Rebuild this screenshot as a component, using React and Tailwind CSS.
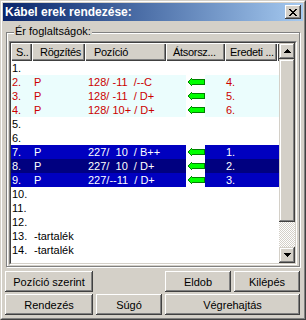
import React from "react";

const rows = [
  { n: "1." },
  { n: "2.", r: "P", p: "128/ -11  /--C", a: true, e: "4.", k: "red" },
  { n: "3.", r: "P", p: "128/ -11  / D+", a: true, e: "5.", k: "red" },
  { n: "4.", r: "P", p: "128/ 10+ / D+", a: true, e: "6.", k: "red" },
  { n: "5." },
  { n: "6." },
  { n: "7.", r: "P", p: "227/  10  / B++", a: true, e: "1.", k: "blue" },
  { n: "8.", r: "P", p: "227/  10  / D+", a: true, e: "2.", k: "sel" },
  { n: "9.", r: "P", p: "227/--11  / D+", a: true, e: "3.", k: "blue" },
  { n: "10." },
  { n: "11." },
  { n: "12." },
  { n: "13.", r: "-tartalék" },
  { n: "14.", r: "-tartalék" },
];

const kindCls = {
  red: "bg-[#ebfdfd] text-[#cc0000]",
  blue: "bg-[#0000c0] text-white",
  sel: "bg-[#000080] text-white",
};

function Arrow() {
  return (
    <svg width="19" height="10" viewBox="0 0 19 10" shapeRendering="crispEdges">
      <polygon points="1,5 6,0 6,2 19,2 19,8 6,8 6,10" fill="#008000" />
      <polygon points="2,5 6,1.5 6,3 18,3 18,7 6,7 6,8.5" fill="#00ff00" />
    </svg>
  );
}

function Tri({ up }) {
  return (
    <svg width="7" height="4" viewBox="0 0 7 4" shapeRendering="crispEdges">
      {up ? (
        <polygon points="3.5,0 7,4 0,4" fill="#000" />
      ) : (
        <polygon points="0,0 7,0 3.5,4" fill="#000" />
      )}
    </svg>
  );
}

const raised =
  "bg-[#d4d0c8] shadow-[inset_-1px_-1px_#404040,inset_1px_1px_#fff,inset_-2px_-2px_#808080]";
const sbRaised =
  "bg-[#d4d0c8] shadow-[inset_-1px_-1px_#404040,inset_1px_1px_#d4d0c8,inset_-2px_-2px_#808080,inset_2px_2px_#fff]";

function Btn({ w, children }) {
  return (
    <div className={`${raised} ${w} h-[21px] flex items-center justify-center text-black`}>
      {children}
    </div>
  );
}

function Hdr({ w, pl, children }) {
  return (
    <div
      className={`${w} ${pl} h-[18px] shrink-0 flex items-center overflow-hidden whitespace-nowrap tracking-[-0.3px] bg-[#d4d0c8] shadow-[inset_1px_1px_#fff,inset_-1px_-1px_#404040,inset_-2px_-2px_#808080]`}
    >
      {children}
    </div>
  );
}

export default function App() {
  return (
    <div className="w-[306px] h-[320px] bg-[#d4d0c8] border border-t-[#d4d0c8] border-l-[#d4d0c8] border-r-[#404040] border-b-[#404040] font-['Liberation_Sans',Arial,sans-serif] text-[11px] leading-[14px] text-black">
      <div className="h-full border border-t-white border-l-white border-r-[#808080] border-b-[#808080] p-[1px] flex flex-col">
        {/* title bar */}
        <div className="h-[18px] shrink-0 flex items-center justify-between pl-[2px] pr-[2px] bg-gradient-to-r from-[#0a246a] to-[#a6caf0]">
          <span className="text-white font-bold text-[12px] leading-[18px]">Kábel erek rendezése:</span>
          <div className={`${raised} w-[16px] h-[14px] flex items-center justify-center`}>
            <svg width="8" height="7" viewBox="0 0 8 7" shapeRendering="crispEdges">
              <path d="M0 0h2v1h-2zM6 0h2v1h-2zM1 1h2v1h-2zM5 1h2v1h-2zM2 2h4v1h-4zM3 3h2v1h-2zM2 4h4v1h-4zM1 5h2v1h-2zM5 5h2v1h-2zM0 6h2v1h-2zM6 6h2v1h-2z" fill="#000" />
            </svg>
          </div>
        </div>

        {/* group box */}
        <div className="relative mt-[11px] ml-[3px] w-[294px] h-[235px] shrink-0 border border-[#808080] shadow-[inset_1px_1px_#fff,1px_1px_#fff] pt-[8px] pl-[2px]">
          <span className="absolute left-[7px] top-[-8px] px-[1px] bg-[#d4d0c8] leading-[13px]">Ér foglaltságok:</span>
          {/* listview */}
          <div className="w-[288px] h-[224px] border border-t-[#808080] border-l-[#808080] border-r-white border-b-white">
            <div className="w-full h-full border border-t-[#404040] border-l-[#404040] border-r-[#d4d0c8] border-b-[#d4d0c8] bg-white flex">
              <div className="w-[268px] flex flex-col">
                <div className="flex">
                  <Hdr w="w-[21px]" pl="pl-[5px]">S..</Hdr>
                  <Hdr w="w-[53px]" pl="pl-[8px]">Rögzítés</Hdr>
                  <Hdr w="w-[81px]" pl="pl-[9px]">Pozíció</Hdr>
                  <Hdr w="w-[59px]" pl="pl-[7px]">Átsorsz...</Hdr>
                  <Hdr w="w-[52px]" pl="pl-[5px]">Eredeti ...</Hdr>
                  <Hdr w="w-[2px]" pl="pl-0"></Hdr>
                </div>
                {rows.map((row) => (
                  <div
                    key={row.n}
                    className={`flex h-[14px] whitespace-pre ${row.k ? kindCls[row.k] : "bg-white text-black"}`}
                  >
                    <div className="w-[21px] pl-[1px] shrink-0">{row.n}</div>
                    <div className="w-[53px] pl-[2px] shrink-0">{row.r || ""}</div>
                    <div className="w-[81px] pl-[3px] shrink-0 overflow-hidden">{row.p || ""}</div>
                    <div className="w-[59px] shrink-0 flex justify-center">
                      {row.a && (
                        <div className="w-[19px] h-[14px] bg-white flex items-center">
                          <Arrow />
                        </div>
                      )}
                    </div>
                    <div className="w-[52px] pl-[1px] shrink-0">{row.e || ""}</div>
                  </div>
                ))}
              </div>
              {/* scrollbar */}
              <div className="w-[16px] flex flex-col">
                <div className={`${sbRaised} h-[16px] flex items-center justify-center`}>
                  <Tri up />
                </div>
                <div className={`${sbRaised} h-[163px]`}></div>
                <div className="flex-1 bg-[repeating-conic-gradient(#d4d0c8_0_25%,#ffffff_0_50%)] bg-[length:2px_2px]"></div>
                <div className={`${sbRaised} h-[16px] flex items-center justify-center`}>
                  <Tri />
                </div>
              </div>
            </div>
          </div>
        </div>

        {/* buttons */}
        <div className="mt-[4px] pl-[2px] pr-[3px] flex">
          <Btn w="w-[88px]">Pozíció szerint</Btn>
          <div className="flex-1"></div>
          <Btn w="w-[66px]">Eldob</Btn>
          <div className="w-[3px]"></div>
          <Btn w="w-[66px]">Kilépés</Btn>
        </div>
        <div className="mt-[2px] pl-[2px] pr-[3px] flex gap-[3px]">
          <Btn w="w-[88px]">Rendezés</Btn>
          <Btn w="w-[66px]">Súgó</Btn>
          <Btn w="w-[135px]">Végrehajtás</Btn>
        </div>
      </div>
    </div>
  );
}
